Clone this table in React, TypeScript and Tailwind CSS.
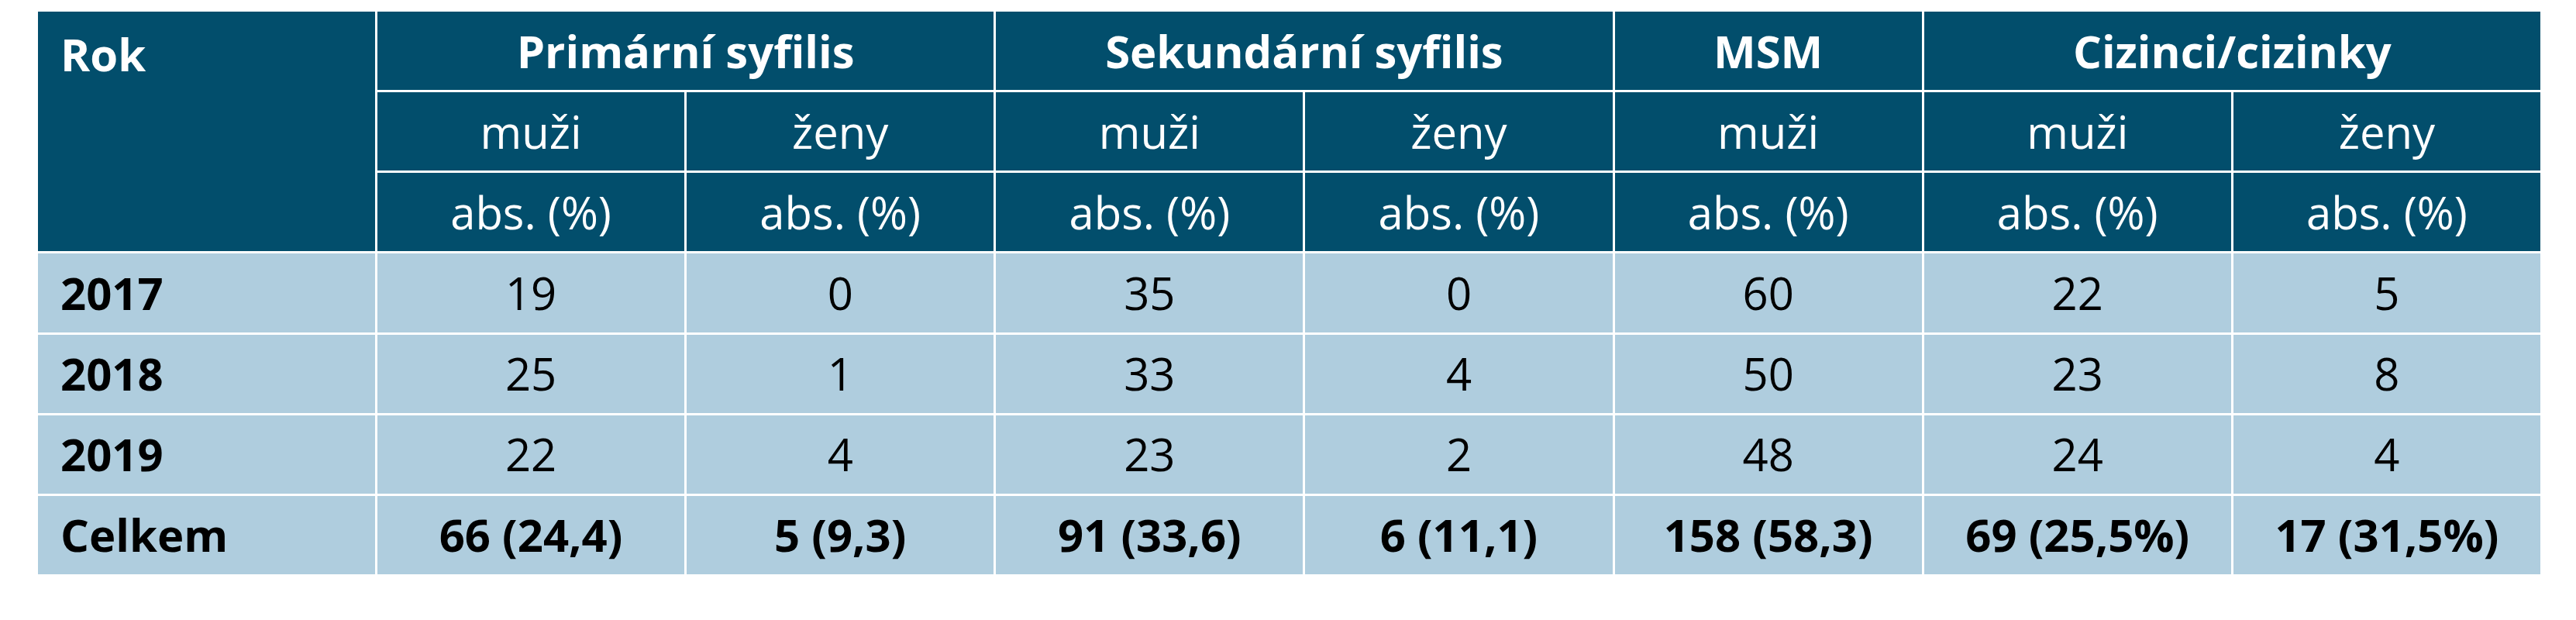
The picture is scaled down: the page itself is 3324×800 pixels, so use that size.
import { Fragment } from 'react';

const groups = [
  { title: 'Primární syfilis', subs: ['muži', 'ženy'] },
  { title: 'Sekundární syfilis', subs: ['muži', 'ženy'] },
  { title: 'MSM', subs: ['muži'] },
  { title: 'Cizinci/cizinky', subs: ['muži', 'ženy'] },
];

const rows = [
  { year: '2017', values: ['19', '0', '35', '0', '60', '22', '5'] },
  { year: '2018', values: ['25', '1', '33', '4', '50', '23', '8'] },
  { year: '2019', values: ['22', '4', '23', '2', '48', '24', '4'] },
];

const total = ['66 (24,4)', '5 (9,3)', '91 (33,6)', '6 (11,1)', '158 (58,3)', '69 (25,5%)', '17 (31,5%)'];

const head = 'flex items-center justify-center bg-[#024e6c] text-white';
const body = 'flex items-center justify-center bg-[#afcdde] text-black';

export default function App() {
  const subs = groups.flatMap((g) => g.subs);
  return (
    <div className="min-h-screen bg-white pl-[49px] pt-[15px]" style={{ fontFamily: '"Open Sans", "Noto Sans", sans-serif' }}>
      <div className="grid h-[726px] w-[3229px] grid-cols-[435px_repeat(7,1fr)] grid-rows-7 gap-[3px] bg-white text-[58px] leading-none">
        <div className="row-span-3 flex items-start bg-[#024e6c] pl-[29px] pt-[26px] font-bold text-white">Rok</div>
        {groups.map((g) => (
          <div key={g.title} className={`${head} font-bold ${g.subs.length === 2 ? 'col-span-2' : ''}`}>
            {g.title}
          </div>
        ))}
        {subs.map((s, i) => (
          <div key={'s' + i} className={head}>
            {s}
          </div>
        ))}
        {subs.map((_, i) => (
          <div key={'a' + i} className={head}>
            abs. (%)
          </div>
        ))}
        {rows.map((r) => (
          <Fragment key={r.year}>
            <div className="flex items-center bg-[#afcdde] pl-[29px] font-bold text-black">{r.year}</div>
            {r.values.map((v, i) => (
              <div key={i} className={body}>
                {v}
              </div>
            ))}
          </Fragment>
        ))}
        <div className="flex items-center bg-[#afcdde] pl-[29px] font-bold text-black">Celkem</div>
        {total.map((v, i) => (
          <div key={'t' + i} className={`${body} font-bold`}>
            {v}
          </div>
        ))}
      </div>
    </div>
  );
}
